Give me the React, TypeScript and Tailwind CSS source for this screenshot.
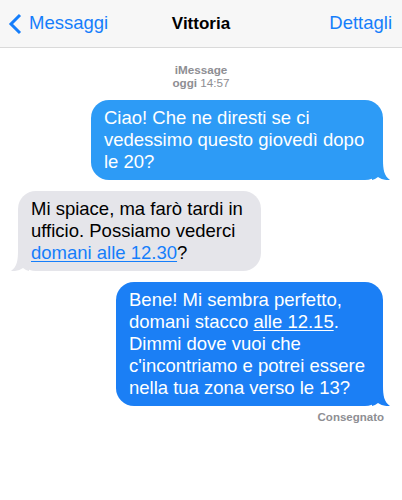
import React from "react";

const font = { fontFamily: '"Liberation Sans", Arial, Helvetica, sans-serif' };

function Tail({ color, side }: { color: string; side: "left" | "right" }) {
  return (
    <svg
      width="18"
      height="20"
      viewBox="0 0 18 20"
      className={
        side === "right"
          ? "absolute right-[-7px] bottom-0"
          : "absolute left-[-7px] bottom-0 -scale-x-100"
      }
    >
      <path
        d="M0 0 H11 C11 9 12 16 18 20 C13 20.5 9 19 6 17 C4 18.5 2 19.5 0 20 Z"
        fill={color}
      />
    </svg>
  );
}

export default function App() {
  return (
    <div className="w-[402px] h-[500px] bg-white overflow-hidden" style={font}>
      {/* Header */}
      <div className="h-[48px] bg-[#f7f7f7] border-b border-[#dadada] grid grid-cols-[1fr_auto_1fr] items-center">
        <div className="flex items-center pl-[7px]">
          <svg width="16" height="22" viewBox="0 0 16 22" className="mt-[1px]">
            <polyline
              points="13,2 4,11 13,20"
              fill="none"
              stroke="#157efb"
              strokeWidth="3"
            />
          </svg>
          <span className="ml-[6px] text-[18.5px] text-[#157efb] leading-none">Messaggi</span>
        </div>
        <div className="text-[17px] font-bold text-black leading-none">Vittoria</div>
        <div className="flex justify-end pr-[10px]">
          <span className="text-[18.5px] text-[#157efb] leading-none">Dettagli</span>
        </div>
      </div>

      {/* Timestamp */}
      <div className="mt-[15px] flex flex-col items-center text-[11.7px] leading-[13px] text-[#8e8e93]">
        <div className="font-bold">iMessage</div>
        <div>
          <span className="font-bold">oggi</span> 14:57
        </div>
      </div>

      <div className="flex flex-col mt-[11px]">
        {/* Bubble 1 */}
        <div className="self-end mr-[19px] relative">
          <div className="w-[292px] h-[80px] rounded-[18px] bg-[#2d9bf6] text-white text-[18.5px] leading-[22px] pl-[13px] pt-[7px] whitespace-nowrap relative z-10">
            Ciao! Che ne diresti se ci
            <br />
            vedessimo questo giovedì dopo
            <br />
            le 20?
          </div>
          <Tail color="#2d9bf6" side="right" />
        </div>

        {/* Bubble 2 */}
        <div className="self-start ml-[18px] mt-[11px] relative">
          <div className="w-[243px] h-[80px] rounded-[18px] bg-[#e5e5ea] text-black text-[18.5px] leading-[22px] pl-[13px] pt-[7px] whitespace-nowrap relative z-10">
            Mi spiace, ma farò tardi in
            <br />
            ufficio. Possiamo vederci
            <br />
            <span className="text-[#157efb] underline decoration-1 underline-offset-2">domani alle 12.30</span>?
          </div>
          <Tail color="#e5e5ea" side="left" />
        </div>

        {/* Bubble 3 */}
        <div className="self-end mr-[19px] mt-[11px] relative">
          <div className="w-[267px] h-[124px] rounded-[18px] bg-[#1b7ff5] text-white text-[18.5px] leading-[22px] pl-[13px] pt-[7px] whitespace-nowrap relative z-10">
            Bene! Mi sembra perfetto,
            <br />
            domani stacco <span className="underline decoration-1 underline-offset-2">alle 12.15</span>.
            <br />
            Dimmi dove vuoi che
            <br />
            c'incontriamo e potrei essere
            <br />
            nella tua zona verso le 13?
          </div>
          <Tail color="#1b7ff5" side="right" />
        </div>

        <div className="self-end mr-[18px] mt-[4px] text-[11.5px] font-bold text-[#8e8e93] leading-[14px]">
          Consegnato
        </div>
      </div>
    </div>
  );
}
